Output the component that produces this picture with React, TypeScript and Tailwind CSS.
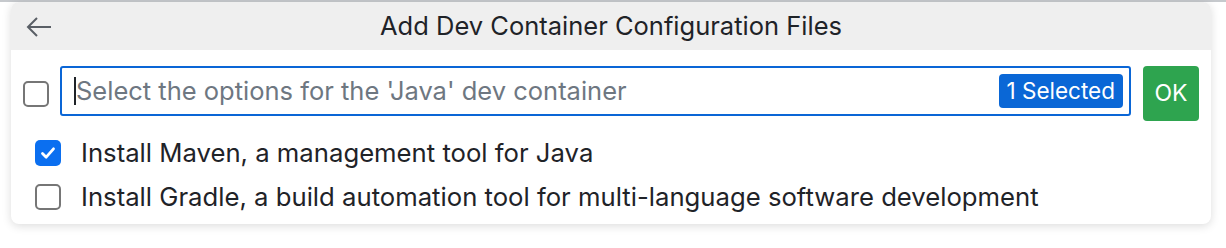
import React from "react";

function Box({ checked }: { checked?: boolean }) {
  if (checked) {
    return (
      <div className="w-[26px] h-[26px] rounded-[5px] bg-[#0b6ff0] flex items-center justify-center shrink-0">
        <svg width="18" height="18" viewBox="0 0 18 18" fill="none">
          <path d="M3.5 9.5 L7.2 13.2 L14.5 4.8" stroke="white" strokeWidth="2.8" strokeLinecap="round" strokeLinejoin="round" />
        </svg>
      </div>
    );
  }
  return <div className="w-[26px] h-[26px] rounded-[5px] border-2 border-[#767676] bg-white shrink-0" />;
}

export default function App() {
  return (
    <div className="w-[1226px] h-[248px] bg-white relative overflow-hidden" style={{ fontFamily: "Inter, 'Noto Sans', sans-serif" }}>
      <div className="h-[2px] bg-[#c6c9cd]" />
      <div className="mx-[11px] w-[1200px] h-[222px] rounded-[8px] bg-white shadow-[0_2px_10px_rgba(0,0,0,0.14)] overflow-hidden">
        <div className="h-[48px] bg-[#efefef] relative flex items-center justify-center">
          <svg className="absolute left-[15px] top-[14px]" width="26" height="22" viewBox="0 0 26 22" fill="none">
            <path d="M2 11 H25 M11 2 L2 11 L11 20" stroke="#5a5f66" strokeWidth="2" strokeLinejoin="miter" />
          </svg>
          <span className="text-[25.5px] leading-[30px] text-[#1f2328]">Add Dev Container Configuration Files</span>
        </div>
        <div className="pt-[16px] px-[12px] flex items-start">
          <div className="pt-[15px]"><Box /></div>
          <div className="ml-[11px] w-[1071px] h-[50px] border-2 border-[#0a66d6] rounded-[3px] flex items-center pl-[12px] pr-[6px]">
            <div className="w-[2px] h-[28px] bg-[#1f2328]" />
            <span className="text-[25.5px] leading-[30px] text-[#6e7781] flex-1 whitespace-nowrap">Select the options for the 'Java' dev container</span>
            <span className="bg-[#0a67d6] text-white text-[22.5px] leading-[28px] rounded-[4px] h-[34px] px-[8px] flex items-center whitespace-nowrap">1 Selected</span>
          </div>
          <div className="ml-[12px] w-[56px] h-[55px] bg-[#2ea44f] rounded-[4px] text-white text-[23px] flex items-center justify-center">OK</div>
        </div>
        <div className="pl-[24px] pt-[19px] flex flex-col gap-[18px]">
          <div className="flex items-center gap-[20px] h-[26px]">
            <Box checked />
            <span className="text-[25.7px] leading-[30px] text-[#1f2328] whitespace-nowrap">Install Maven, a management tool for Java</span>
          </div>
          <div className="flex items-center gap-[20px] h-[26px]">
            <Box />
            <span className="text-[25.7px] leading-[30px] text-[#1f2328] whitespace-nowrap">Install Gradle, a build automation tool for multi-language software development</span>
          </div>
        </div>
      </div>
    </div>
  );
}
